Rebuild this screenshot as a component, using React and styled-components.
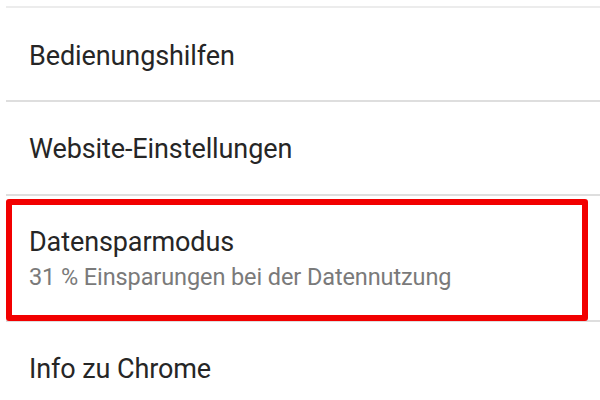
import React from 'react';
import styled, { createGlobalStyle } from 'styled-components';

const GlobalStyle = createGlobalStyle`
  html, body {
    margin: 0;
    padding: 0;
    background: #ffffff;
  }
  body {
    font-family: Roboto, "Liberation Sans", sans-serif;
    -webkit-font-smoothing: antialiased;
  }
`;

const Screen = styled.div`
  width: 600px;
  height: 400px;
  overflow: hidden;
  background: #ffffff;
  padding-top: 6px;
  box-sizing: border-box;
`;

const List = styled.div`
  display: flex;
  flex-direction: column;
  padding-left: 6px;
`;

const Row = styled.div`
  display: flex;
  align-items: center;
  box-sizing: border-box;
  height: 94px;
  border-top: 2px solid ${(p) => (p.$faint ? '#ececec' : '#dedede')};
  padding: ${(p) => p.$shift || '0'} 0 0 23px;
`;

const HighlightRow = styled.div`
  box-sizing: border-box;
  height: 126px;
  border-top: 2px solid #dedede;
  padding: 3px 12px 0 0;
`;

const Highlight = styled.div`
  box-sizing: border-box;
  height: 122px;
  margin-bottom: -1px;
  border: 6px solid #f20000;
  border-radius: 3px;
  padding: 0 0 3px 17px;
  display: flex;
  flex-direction: column;
  justify-content: center;
  background: #ffffff;
  position: relative;
`;

const Title = styled.div`
  font-size: 27px;
  line-height: 30px;
  color: #262626;
  letter-spacing: -0.1px;
`;

const Subtitle = styled.div`
  font-size: 23.5px;
  line-height: 28px;
  color: #7a7a7a;
  margin-top: 6px;
  letter-spacing: -0.1px;
`;

export default function App() {
  return (
    <>
      <GlobalStyle />
      <Screen>
        <List>
          <Row $faint $shift="3px">
            <Title>Bedienungshilfen</Title>
          </Row>
          <Row $shift="2px">
            <Title>Website-Einstellungen</Title>
          </Row>
          <HighlightRow>
            <Highlight>
              <Title>Datensparmodus</Title>
              <Subtitle>31 % Einsparungen bei der Datennutzung</Subtitle>
            </Highlight>
          </HighlightRow>
          <Row $shift="2px">
            <Title>Info zu Chrome</Title>
          </Row>
        </List>
      </Screen>
    </>
  );
}
